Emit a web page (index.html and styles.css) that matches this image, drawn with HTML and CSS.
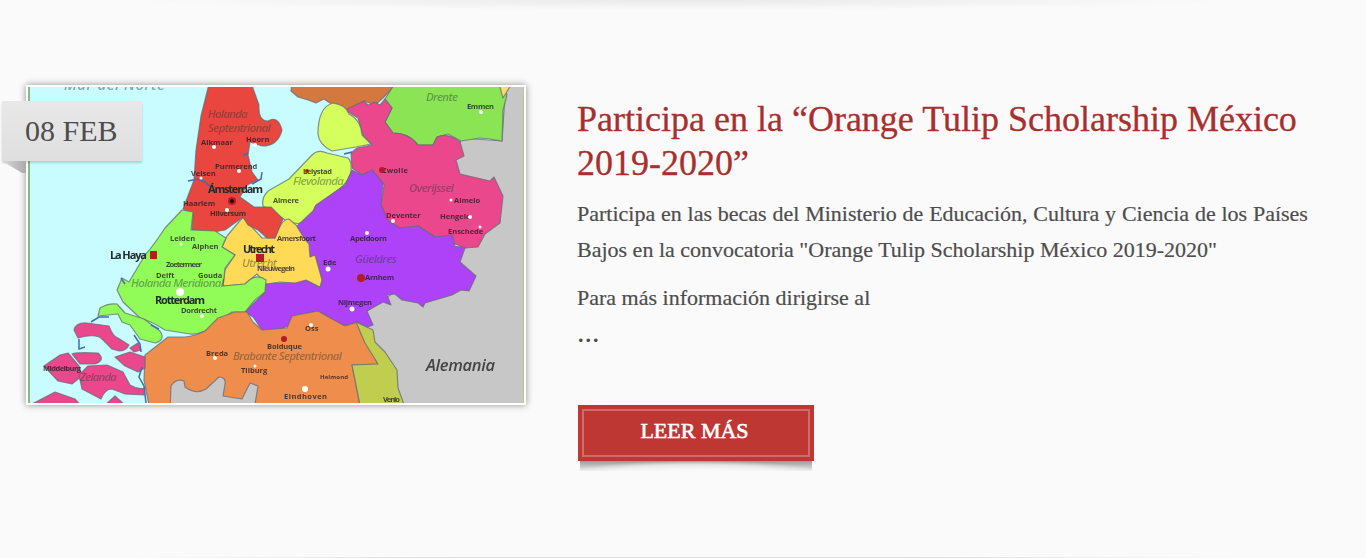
FILE: index.html
```html
<!DOCTYPE html>
<html lang="es">
<head>
<meta charset="utf-8">
<title>Orange Tulip Scholarship México</title>
<link rel="stylesheet" href="styles.css">
</head>
<body>
<article class="post">
  <div class="media">
    <div class="map-frame">
    <svg class="map" viewBox="28 87 496 316" role="img" aria-label="Mapa de los Países Bajos">
      <rect x="20" y="80" width="512" height="330" fill="#c8fcfe"/>
      <g class="regions">
        <path fill="#c7c7c8" d="M506 80H535V410H395L360 325 367 311 470 240 455 160 461 138 502 141Z"/>
        <path fill="#d4783f" d="M292 80H400L383 98 375 105 364 101 348 110 330 103 324 99 316 103 308 100 298 97 291 91Z"/>
        <path fill="#8ae454" d="M397 80H499L507 95 503 110 502 141 490 139 480 138 461 141 448 134 437 137 433 145 418 145 Q409 133 393 133L385 122 392 108 385 99Z"/>
        <path fill="#ffda68" d="M498 80H514L503 98Z"/>
        <path fill="#eb478c" d="M345 110L364 101 368 105 375 102 380 105 385 99 392 108 385 122 393 133Q409 133 418 145L433 145 437 137Q448 132 460 142L464 156 456 160 460 174 490 181 494 177 503 196 500 223 485 234 478 247 465 248 455 244 452 235 435 237 418 226 400 228 388 221 381 205 384 185 372 170 362 175 352 168 351 153 357 148 372 145 363 135 358 118Z"/>
        <path fill="#d4ff5c" d="M333 103Q346 105 349 114 361 120 362 135L371 144 356 147 332 151Q319 145 318 134 318 107 333 103Z"/>
        <path fill="#d4ff5c" d="M312 155Q318 149 327 153L348 158Q352 161 351 173 347 184 338 190L315 207Q314 217 306 221 298 226 287 221L263 206Q261 198 268 191L289 179Z"/>
        <path fill="#ad42f8" d="M297 226L313 211 316 205 345 185 352 170 362 175 372 170 383 183 381 205 388 221 400 228 418 226 435 237 452 235 455 246 465 248 460 262 476 276 469 291 461 290 452 295 425 303 423 307 418 303 402 300 395 294 387 295 391 305 383 302 367 311 373 325 365 328 358 322Q343 330 330 318L318 311 297 315 292 325 280 329 262 330 253 317 245 312 265 292 265 282 280 283 306 280 319 287 322 280 315 255 310 258Z"/>
        <path fill="#ffda57" d="M243 217L250 225 262 238 275 238Q281 219 289 219L296 225 304 238 309 244 310 257 315 255 322 280 320 287 314 284 306 280 295 283 280 282 266 284 257 274 245 284 223 286 225 270 235 255 222 247 227 236Z"/>
        <path fill="#e9463f" d="M210 80H250L259 105Q258 121 268 121 278 115 282 130 278 146 262 146L250 142 248 155 252 172 258 180 247 185 240 197 254 207 271 207 283 219 275 238 267 238 258 230 248 225 243 217 232 225 225 230 214 232 203 231 192 230 193 214 183 209 194 180 196 150 201 116Z"/>
        <path fill="#91fb57" d="M182 210L193 212 191 230 215 231 226 238 222 247 235 255 225 268 223 286 245 284Q256 272 266 280L265 292 255 300 245 312 232 312 218 322 Q205 335 190 334L165 330Q151 321 140 318L123 302 117 290 122 278 129 282 145 255Q154 245 165 228Z"/>
        <path fill="#91fb57" d="M98 316L100 308Q108 303 117 304L125 313 144 319 160 331Q166 340 155 343L140 339 130 325 122 322 118 314Z"/>
        <path fill="#ef8e4c" d="M145 355L168 337 185 337Q195 336 205 331L218 318 235 312 247 312 253 322 262 330 287 328 292 316 318 311Q330 318 345 326L358 322 366 340 378 364 352 365 361 410H150L144 380Z"/>
        <path fill="#c7c7c8" d="M170 410L171 386Q176 378 184 381L185 387Q196 395 206 389L219 377Q226 377 225 384L223 396 242 399 250 383 258 386 254 410Z"/>
        <path fill="#c0ce50" d="M356 322L373 330 375 342 385 352 397 370 398 388 406 410H361L352 365 378 364 365 343Z"/>
        <g fill="#eb478c">
          <path d="M74 330Q76 322 87 323L109 326Q113 337 118 338L129 345Q126 351 119 351L112 349 102 339Q96 333 78 338Z"/>
          <path d="M44 366L60 355 68 353 79 366 82 376 72 384 58 381Z"/>
          <path d="M72 354Q76 352 98 353 106 360 95 364L80 364Z"/>
          <path d="M79 375L88 366 107 365 123 372 130 385Q138 390 145 388L144 395 125 394 112 389Q105 389 101 399L82 389Z"/>
          <path d="M115 357L130 352 145 357 145 368 138 372 125 366Z"/>
          <path d="M32 404L55 392 75 399 85 410H32ZM105 405L115 396 125 405ZM130 348L138 343 141 350 134 352Z"/>
        </g>
      </g>
      <g class="water">
        <path d="M188 181l10-2 7 3 6 5M252 184l9-5 1-7M243 156l5-3M344 154l8-2M121 278l4 6M91 322l8-5 10 0M79 339v10l6-2M134 335l6 9 1 8M142 367l-3 10 5 9 2 17M151 325l8 4"/>
      </g>
      <g class="region-name">
        <text class="sea" x="64" y="90" textLength="101">Mar del Norte</text>
        <text x="208" y="118" textLength="40">Holanda</text><text x="208" y="132" textLength="63">Septentrional</text>
        <text x="426" y="101" textLength="32">Drente</text><text x="409" y="192" textLength="45">Overijssel</text>
        <text x="293" y="185" textLength="51">Flevolanda</text><text x="355" y="263" textLength="42">Güeldres</text>
        <text x="131" y="287" textLength="93">Holanda Meridional</text><text x="242" y="267" textLength="35">Utrecht</text>
        <text x="233" y="360" textLength="109">Brabante Septentrional</text><text x="80" y="381" textLength="37">Zelanda</text>
      </g>
      <g class="town">
        <text x="201" y="145">Alkmaar</text><text x="215" y="169">Purmerend</text><text x="191" y="176">Velsen</text><text x="246" y="142">Hoorn</text>
        <text x="183" y="206" textLength="32">Haarlem</text><text x="210" y="216" textLength="36">Hilversum</text>
        <text x="303" y="174" textLength="29">Lelystad</text><text x="273" y="203" textLength="26">Almere</text>
        <text x="467" y="109" textLength="27">Emmen</text><text x="382" y="173" textLength="26">Zwolle</text><text x="454" y="203">Almelo</text>
        <text x="440" y="219">Hengelo</text><text x="448" y="234">Enschede</text><text x="386" y="218">Deventer</text>
        <text x="170" y="241">Leiden</text><text x="192" y="249">Alphen</text><text x="277" y="241" textLength="39">Amersfoort</text><text x="350" y="241" textLength="37">Apeldoorn</text>
        <text x="257" y="271" textLength="38">Nieuwegein</text><text x="323" y="265">Ede</text><text x="365" y="280" textLength="29">Arnhem</text><text x="338" y="305" textLength="34">Nijmegen</text>
        <text x="166" y="267" textLength="36">Zoetermeer</text><text x="156" y="278">Delft</text><text x="198" y="278">Gouda</text><text x="181" y="313" textLength="36">Dordrecht</text>
        <text x="206" y="356">Breda</text><text x="241" y="373">Tilburg</text><text x="305" y="331">Oss</text><text x="267" y="349" textLength="35">Bolduque</text>
        <text class="small" x="320" y="379" textLength="28">Helmond</text><text x="284" y="399" textLength="43">Eindhoven</text><text x="383" y="402" textLength="17">Venlo</text><text x="43" y="371" textLength="38">Middelburg</text>
      </g>
      <g class="city">
        <text x="208" y="193" textLength="55">Ámsterdam</text><text x="110" y="259" textLength="37">La Haya</text>
        <text x="243" y="253" textLength="32">Utrecht</text><text x="155" y="304" textLength="50">Rotterdam</text>
      </g>
      <text class="country" x="426" y="371" textLength="69">Alemania</text>
      <g fill="#b41c24"><circle cx="232" cy="201" r="4"/><path d="M150 251h7v8h-7ZM256 254h8v8h-8Z"/><circle cx="382" cy="170" r="3"/><circle cx="361" cy="278" r="4"/><circle cx="284" cy="339" r="3"/><circle cx="307" cy="171" r="2"/></g>
      <circle cx="232" cy="201" r="2" fill="#22090b"/>
      <g fill="#fff"><circle cx="214" cy="147" r="2"/><circle cx="239" cy="171" r="2"/><circle cx="227" cy="210" r="2"/><circle cx="255" cy="145" r="2"/><circle cx="201" cy="178" r="1.5"/><circle cx="180" cy="292" r="4"/><circle cx="481" cy="112" r="2"/><circle cx="393" cy="221" r="2"/><circle cx="451" cy="200" r="1.5"/><circle cx="470" cy="217" r="2"/><circle cx="480" cy="227" r="1.5"/><circle cx="367" cy="233" r="2"/><circle cx="328" cy="269" r="2.5"/><circle cx="352" cy="309" r="2.5"/><circle cx="215" cy="358" r="2"/><circle cx="255" cy="366" r="1.5"/><circle cx="311" cy="325" r="2"/><circle cx="305" cy="389" r="3"/><circle cx="202" cy="316" r="2"/><circle cx="181" cy="244" r="1.5"/></g>
      <path class="map-edge" d="M29 80V410"/><path class="map-edge right" d="M523.5 80V410"/>
    </svg>
    </div>
    <div class="date">08 FEB</div>
  </div>
  <div class="content">
    <h2 class="title">Participa en la “Orange Tulip Scholarship México 2019-2020”</h2>
    <p class="copy lead">Participa en las becas del Ministerio de Educación, Cultura y Ciencia de los Países Bajos en la convocatoria "Orange Tulip Scholarship México 2019-2020"</p>
    <p class="copy">Para más información dirigirse al</p>
    <p class="more-dots">...</p>
    <a class="button"><span>LEER MÁS</span></a>
  </div>
</article>
</body>
</html>
```
FILE: styles.css
```css
* { box-sizing: border-box; }
body { margin: 0; background: #fafafa; font-family: "Liberation Serif", "Times New Roman", serif; color: #4d4d4d; }
.post { position: relative; display: flex; align-items: flex-start; height: 558px; padding: 85px 40px 0 26px; overflow: hidden; }
.post::before { content: ""; position: absolute; top: -10px; left: 130px; right: 130px; height: 20px; background: radial-gradient(closest-side, #e9e9e9, rgba(250,250,250,0)); }
.post::after { content: ""; position: absolute; bottom: 0; left: 130px; right: 130px; height: 1px; background: linear-gradient(90deg, transparent, #dedede 30%, #dedede 70%, transparent); }
.media { position: relative; flex: none; width: 500px; height: 320px; border: 2px solid #fff; box-shadow: 0 0 7px rgba(0,0,0,.43); }
.map-frame { width: 496px; height: 316px; overflow: hidden; background: #c8c8c8; }
.map { display: block; width: 496px; height: 316px; font-family: "Open Sans", sans-serif; filter: blur(.65px); }
.regions { stroke: #666b76; stroke-width: 1.2; stroke-opacity: .75; stroke-linejoin: round; }
.water { fill: none; stroke: #426caf; stroke-width: 1.5; }
.region-name { font-size: 11.5px; font-style: italic; font-weight: 600; fill: #273a36; fill-opacity: .42; }
.sea { font-size: 15px; }
.town { font-size: 7.5px; font-weight: 700; fill: #221e24; fill-opacity: .8; }
.small { font-size: 6px; }
.city { font-size: 11px; font-weight: 700; fill: #222b2b; }
.country { font-size: 16.5px; font-style: italic; font-weight: 600; fill: #444; }
.map-edge { stroke: #83bd7e; stroke-width: 2; }
.map-edge.right { stroke: #bdc88f; stroke-width: 1; }
.date { position: absolute; left: -26px; top: 14px; width: 140px; height: 60px; padding-left: 23px; background: linear-gradient(#e9e8e9, #e0dfe0); color: #4d4d4d; font-size: 30px; line-height: 59px; box-shadow: 0 2px 2px rgba(0,0,0,.16); white-space: nowrap; }
.date::after { content: ""; position: absolute; left: 0; top: 60px; width: 24px; height: 12px; background: linear-gradient(90deg, #dadada, #aaa); clip-path: polygon(0 0, 100% 0, 100% 100%, 84% 100%); }
.content { width: 749px; margin-left: 51px; padding-top: 13px; }
.title { margin: 0 0 11px; font-size: 36px; font-weight: 400; line-height: 43.5px; color: #a82f2d; -webkit-text-stroke: .3px #a82f2d; }
.copy { margin: 0 0 12px; font-size: 22px; line-height: 36px; -webkit-text-stroke: .2px #4d4d4d; }
.lead::first-line { word-spacing: .3px; }
.more-dots { margin: -14px 0 0; font-size: 30px; line-height: 36px; }
.button { position: relative; display: flex; width: 236px; height: 56px; margin: 55px 0 0 1px; padding: 4px; background: #be3733; color: #fff; font-size: 22px; -webkit-text-stroke: .6px #fff; }
.button span { flex: 1; border: 2px solid #cf6b68; padding-right: 3px; text-align: center; line-height: 40px; }
.button::after { content: ""; position: absolute; left: 2px; right: 2px; top: 56px; height: 10px; background: radial-gradient(ellipse 122px 10px at 50% 100%, #fafafa 0%, rgba(250,250,250,.65) 65%, transparent 100%), linear-gradient(#999, #eee); }
```
